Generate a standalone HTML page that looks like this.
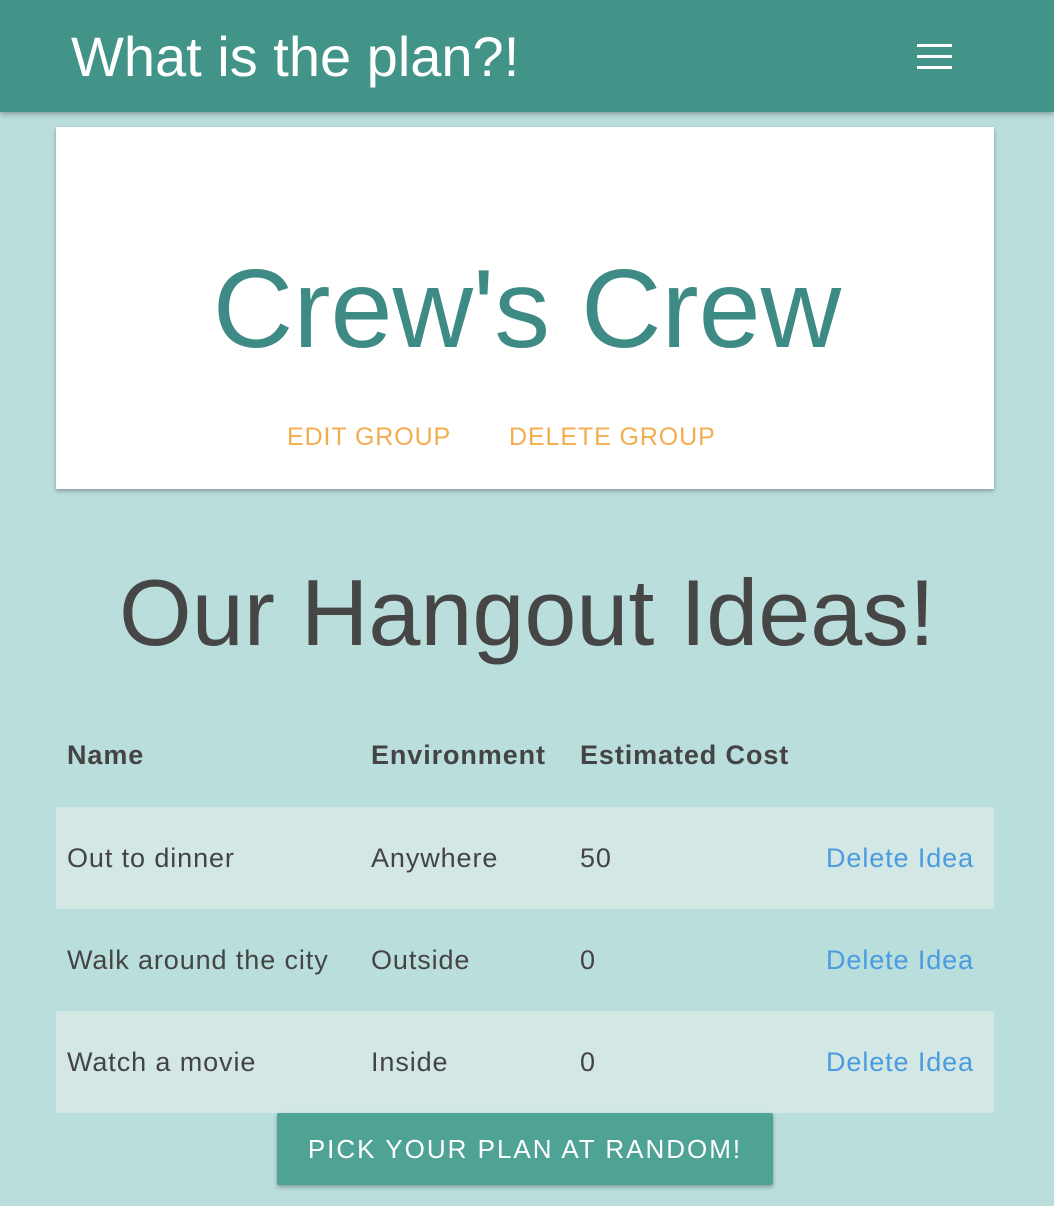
<!DOCTYPE html>
<html><head><style>
body{margin:0;width:1054px;height:1206px;background:#badedb;font-family:"Liberation Sans",sans-serif;overflow:hidden;position:relative}
.hdr{position:absolute;left:0;top:0;width:1054px;height:112px;background:#429488;box-shadow:0 2px 5px rgba(0,0,0,.3)}
.hdr h1{position:absolute;left:71px;top:22px;margin:0;font-weight:normal;font-size:56px;color:#fff;letter-spacing:0;line-height:70px}
.hb{position:absolute;left:917px;width:35px;height:3px;background:#fff}
.card{position:absolute;left:56px;top:127px;width:938px;height:362px;background:#fff;box-shadow:0 2px 4px rgba(0,0,0,.3)}
.btns{position:absolute;top:423px;font-size:25px;color:#f2ad4f;letter-spacing:0.9px}
h3{position:absolute;left:0;width:1054px;top:562px;margin:0;text-align:center;font-weight:normal;font-size:93.5px;color:#464646;line-height:1.1}
.t{position:absolute;font-size:27px;letter-spacing:0.9px;color:#444}
.b{font-weight:bold}
.row{position:absolute;left:56px;width:938px;height:102px;background:#d3e8e5}
.del{color:#4a9be0}
.pick{position:absolute;left:277px;top:1113px;width:496px;height:72px;background:#4ea395;color:#fff;font-size:26px;text-align:center;line-height:72px;letter-spacing:2px;box-shadow:0 2px 4px rgba(0,0,0,.3);border-radius:2px}
</style></head><body>
<div class="hdr"><h1>What is the plan?!</h1>
<div class="hb" style="top:44px"></div><div class="hb" style="top:55px"></div><div class="hb" style="top:66px"></div></div>
<div class="card"></div>
<div style="position:absolute;left:0;width:1054px;top:253px;text-align:center;font-size:111.5px;color:#3e8b86;line-height:1.0">Crew's Crew</div>
<div class="btns" style="left:287px">EDIT GROUP</div>
<div class="btns" style="left:509px">DELETE GROUP</div>
<h3>Our Hangout Ideas!</h3>
<div class="t b" style="left:67px;top:740px">Name</div>
<div class="t b" style="left:371px;top:740px">Environment</div>
<div class="t b" style="left:580px;top:740px">Estimated Cost</div>
<div class="row" style="top:807px"></div>
<div class="row" style="top:1011px"></div>
<div class="t" style="left:67px;top:843px">Out to dinner</div>
<div class="t" style="left:371px;top:843px">Anywhere</div>
<div class="t" style="left:580px;top:843px">50</div>
<div class="t del" style="left:826px;top:843px">Delete Idea</div>
<div class="t" style="left:67px;top:945px">Walk around the city</div>
<div class="t" style="left:371px;top:945px">Outside</div>
<div class="t" style="left:580px;top:945px">0</div>
<div class="t del" style="left:826px;top:945px">Delete Idea</div>
<div class="t" style="left:67px;top:1047px">Watch a movie</div>
<div class="t" style="left:371px;top:1047px">Inside</div>
<div class="t" style="left:580px;top:1047px">0</div>
<div class="t del" style="left:826px;top:1047px">Delete Idea</div>
<div class="pick">PICK YOUR PLAN AT RANDOM!</div>
</body></html>
